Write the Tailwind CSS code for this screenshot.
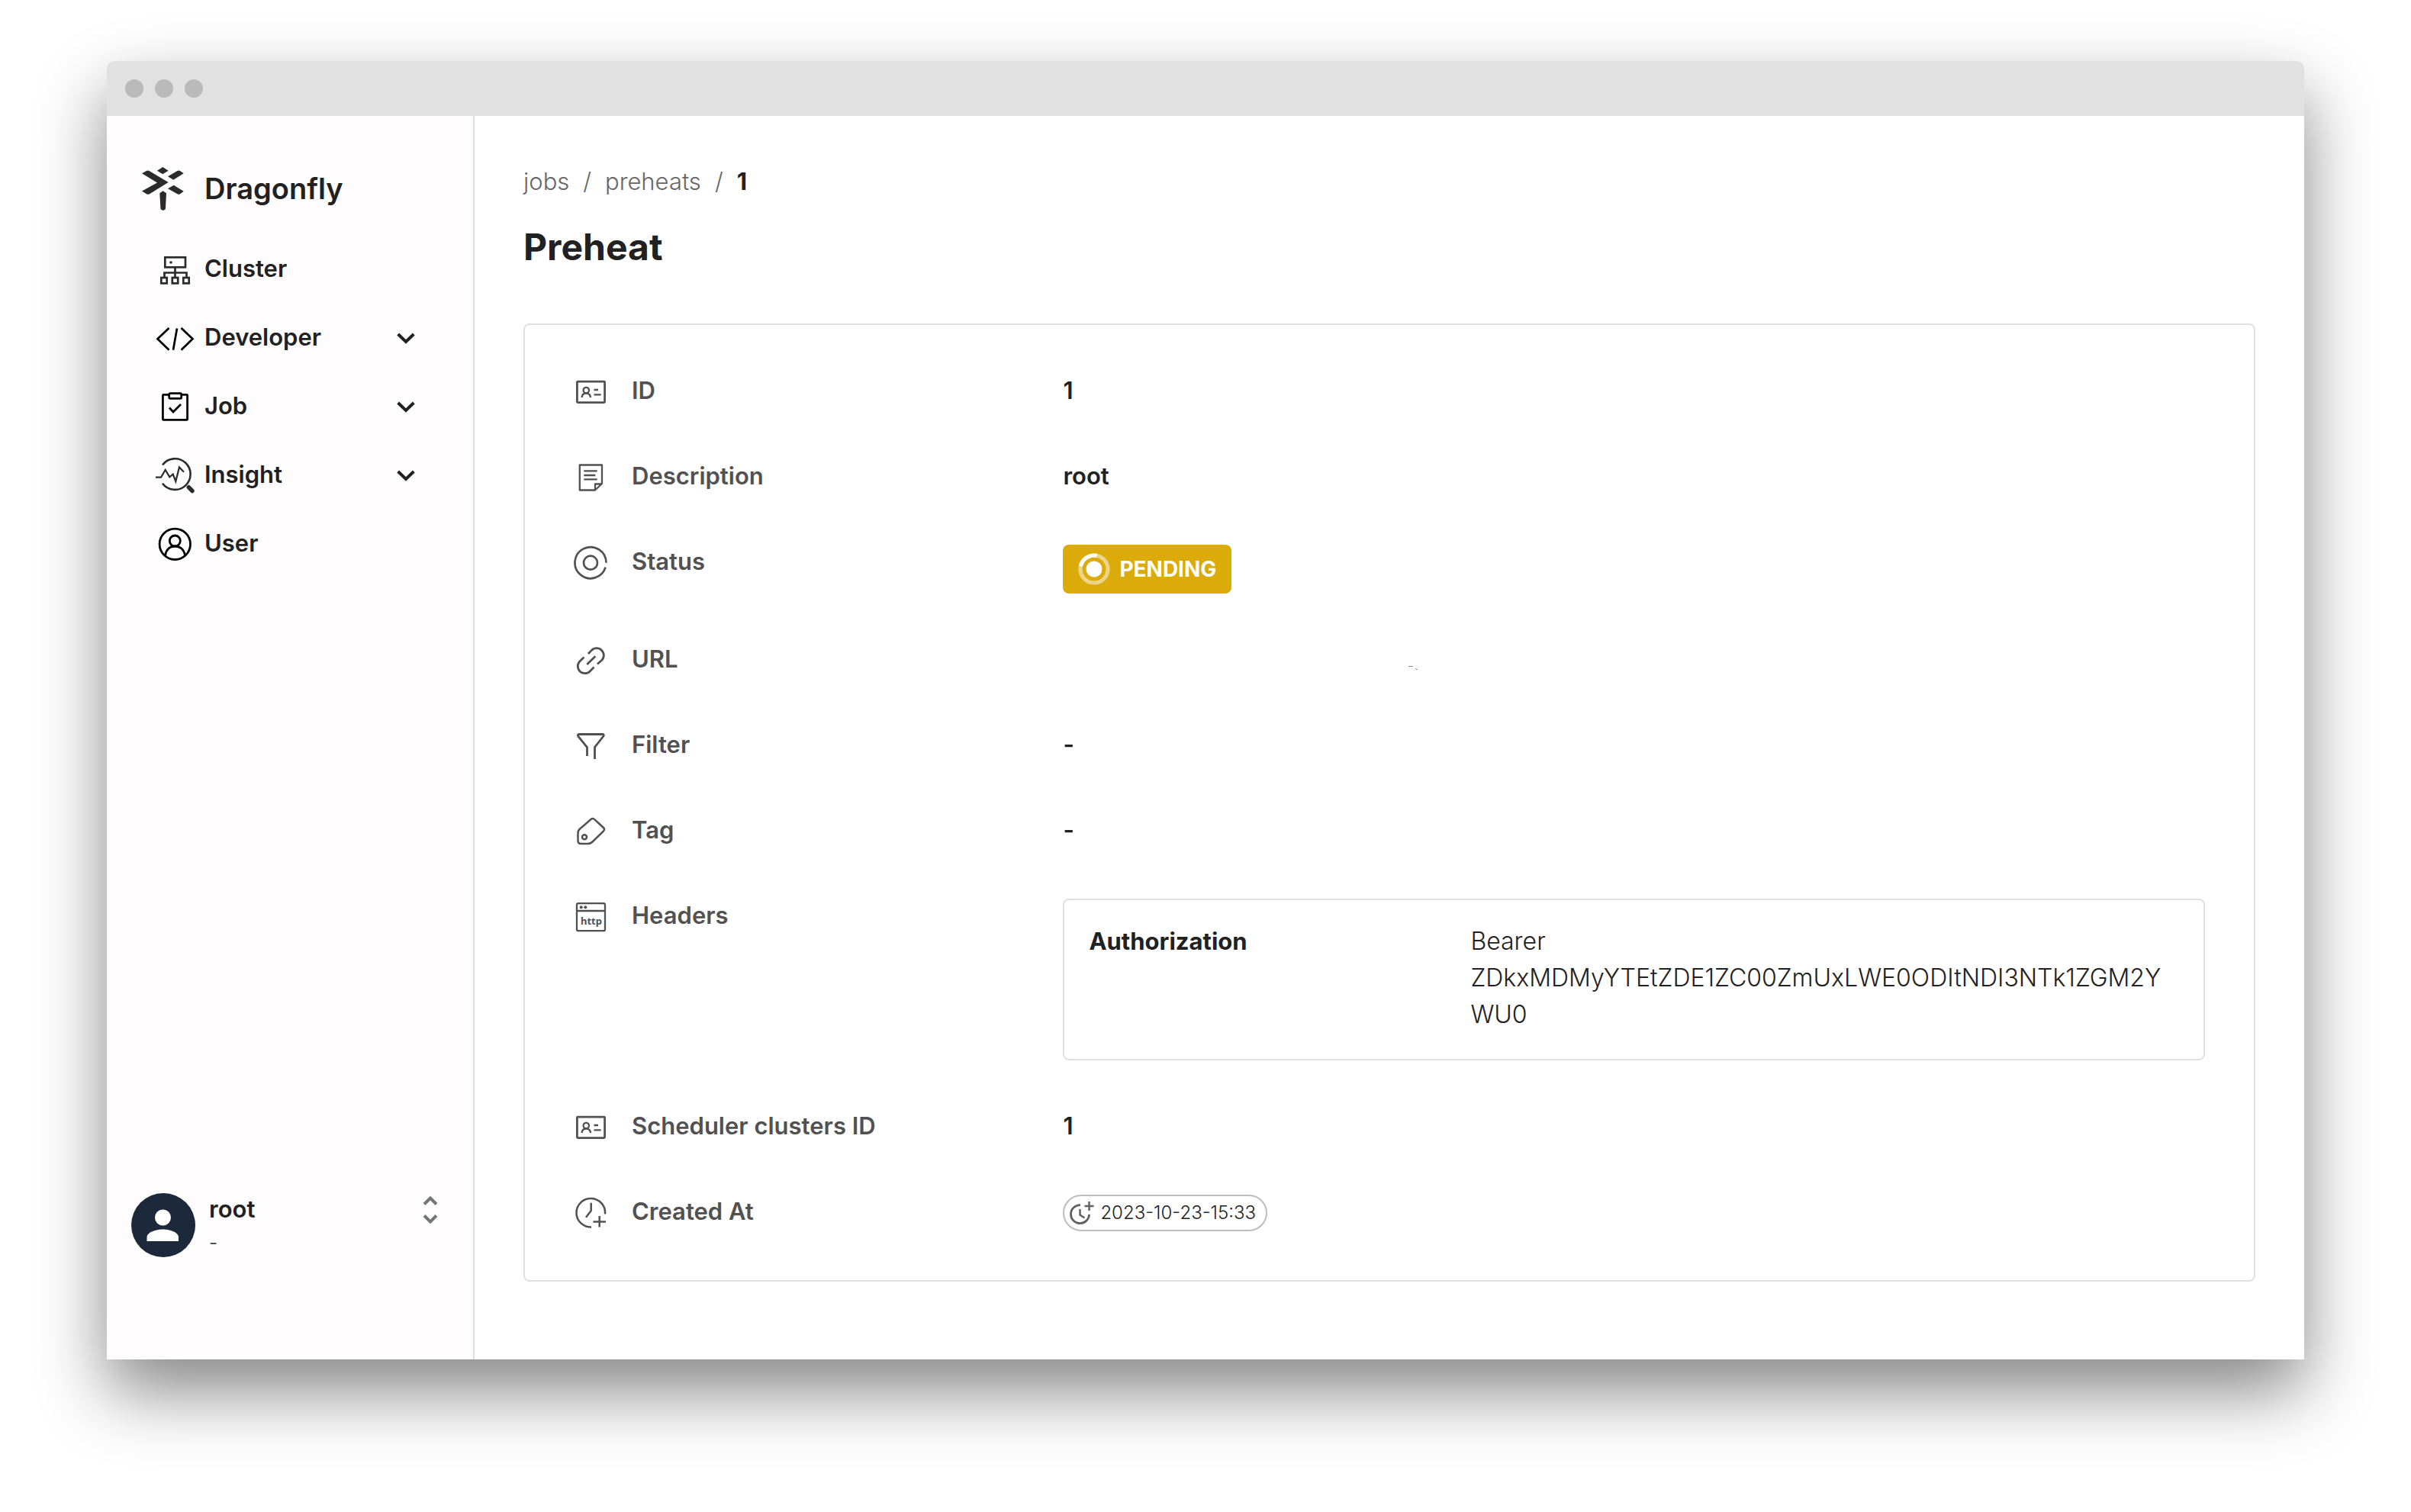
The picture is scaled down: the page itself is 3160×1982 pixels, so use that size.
<!DOCTYPE html>
<html lang="en">
<head>
  <meta charset="UTF-8" />
  <meta name="viewport" content="width=device-width, initial-scale=1.0"/>
  <title>Dragonfly - Preheat</title>
  <script src="https://cdn.jsdelivr.net/npm/@tailwindcss/browser@4"></script>
  <style>
    body {
      font-family: 'Inter', 'Liberation Sans', sans-serif;
    }
  </style>
</head>
<body class="bg-white text-[#212121] text-[31px] px-[140px] pt-20 pb-[200px]">

  <!-- Browser window -->
  <div class="rounded-t-[10px] shadow-[0_42px_92px_rgba(0,0,0,0.48)]">
    <div class="flex items-center gap-[15px] h-[72px] pl-6 bg-[#e1e1e1] rounded-t-[10px]">
      <span class="size-6 rounded-full bg-[#bababa]"></span>
      <span class="size-6 rounded-full bg-[#bababa]"></span>
      <span class="size-6 rounded-full bg-[#bababa]"></span>
    </div>

    <div class="flex bg-white">

      <!-- Sidebar -->
      <aside class="flex flex-col shrink-0 w-[482px] pt-16 pb-[130px] bg-[#fefcfd] border-r-2 border-[#e0e0e0]">
        <a href="#" class="flex items-center gap-6 pl-11 text-[38px] leading-[62px] font-semibold">
          <svg class="w-[60px] h-[62px]" viewBox="0 0 60 62" fill="#2b2b2b">
            <path d="M29.3 3L36.7 7.7L29.3 12.3L22 7.7Z"/>
            <path d="M2 11.3L8 8Q10 7 12 8.200L36.700 23L12 38.200Q10 39.400 8 38.300L2 34.500L22 23.500Z"/>
            <path d="M36 15.300L48.500 8Q50.500 7 52 8L56.700 11.300L43.300 19.700Z"/>
            <path d="M36 31.300L43.700 26.700L56.700 34.700L52 38.300Q50.500 39.400 48.500 38.300Z"/>
            <path d="M29.500 34.300L34 37.300L32.900 58.300L29.700 60L26.500 58.300L25.300 37.300Z"/>
          </svg>
          Dragonfly
        </a>

        <nav class="mt-[29px] font-semibold">
          <a href="#" class="flex items-center gap-[13px] h-[90px] pl-[63px] pr-[76px]">
            <svg class="w-[52px] h-14" viewBox="0 0 52 56" fill="none" stroke="#2b2b2b" stroke-width="2.700">
              <rect x="13.300" y="13.300" width="26.700" height="13"/>
              <circle cx="21" cy="20" r="1.800" fill="#2b2b2b" stroke="none"/>
              <path d="M26.500 27V39M12.500 39V33.500H41.500V39"/>
              <rect x="8.300" y="40" width="7.400" height="7.400"/>
              <rect x="22.800" y="40" width="7.400" height="7.400"/>
              <rect x="37.300" y="40" width="7.400" height="7.400"/>
            </svg>
            Cluster
          </a>
          <button type="button" class="flex items-center gap-[13px] w-full h-[90px] pl-[63px] pr-[76px]">
            <svg class="w-[52px] h-14" viewBox="0 0 52 56" fill="none" stroke="#000" stroke-width="2.700">
              <path d="M18.500 16L3.500 30.300L18.500 44.700M34.500 16L49.500 30.300L34.500 44.700M29 16.500L24 44.700"/>
            </svg>
            Developer
            <svg class="ml-auto w-6 h-5" viewBox="0 0 24 20" fill="none" stroke="#212121" stroke-width="4"><path d="M1.700 6L12 16L22.300 6"/></svg>
          </button>
          <button type="button" class="flex items-center gap-[13px] w-full h-[90px] pl-[63px] pr-[76px]">
            <svg class="w-[52px] h-14" viewBox="0 0 52 56" fill="none" stroke="#000" stroke-width="2.800">
              <rect x="10.400" y="13.400" width="32.200" height="33" rx="1"/>
              <rect x="18.700" y="11.700" width="16" height="6.600" rx="1.500" fill="#fff"/>
              <path d="M19 30.500L24 36L34 26"/>
            </svg>
            Job
            <svg class="ml-auto w-6 h-5" viewBox="0 0 24 20" fill="none" stroke="#212121" stroke-width="4"><path d="M1.700 6L12 16L22.300 6"/></svg>
          </button>
          <button type="button" class="flex items-center gap-[13px] w-full h-[90px] pl-[63px] pr-[76px]">
            <svg class="w-[52px] h-14" viewBox="0 0 52 56" fill="none" stroke="#2b2b2b" stroke-width="2.600">
              <path d="M10 15.500A20.300 20.300 0 1 1 10 39.700"/>
              <path d="M1 31.700H8L13.700 22L19.300 31.300L23.700 27.500L27.300 37L32 18.500L38 24.700" stroke-width="2.200"/>
              <path d="M44.300 44.700L49 49.500" stroke-width="5.500" stroke-linecap="round"/>
            </svg>
            Insight
            <svg class="ml-auto w-6 h-5" viewBox="0 0 24 20" fill="none" stroke="#212121" stroke-width="4"><path d="M1.700 6L12 16L22.300 6"/></svg>
          </button>
          <a href="#" class="flex items-center gap-[13px] h-[90px] pl-[63px] pr-[76px]">
            <svg class="w-[52px] h-14" viewBox="0 0 52 56" fill="none" stroke="#000" stroke-width="2.800">
              <circle cx="26.300" cy="29.300" r="20.200"/>
              <circle cx="26.300" cy="25" r="7"/>
              <path d="M13.500 44.500C14.500 36 20 32 26.300 32S38.500 36 39.500 44.500"/>
            </svg>
            User
          </a>
        </nav>

        <!-- Signed in user -->
        <button type="button" class="flex items-start mt-auto pl-8 pr-[46px] text-left">
          <svg class="size-[84px]" viewBox="0 0 84 84">
            <circle cx="42" cy="42" r="42" fill="#1c293a"/>
            <circle cx="41.500" cy="32" r="10.500" fill="#fff"/>
            <path d="M20.500 63V58C20.500 51 33 47.500 41.500 47.500S62 51 62 58V63Z" fill="#fff"/>
          </svg>
          <span class="flex flex-col ml-[18px]">
            <span class="leading-[42px] font-semibold">root</span>
            <span class="text-[24px] leading-[46px] text-[#515151]">-</span>
          </span>
          <svg class="ml-auto w-5 h-11" viewBox="0 0 20 44" fill="none" stroke="#757575" stroke-width="4"><path d="M2 14.500L10 6.500L18 14.500M2 29.500L10 37.500L18 29.500"/></svg>
        </button>
      </aside>

      <!-- Main Content -->
      <main class="grow min-w-0 px-16 pt-[62px] pb-[102px]">
        <nav class="flex gap-[18px] leading-[48px] font-light text-[#666666]">
          <a href="#">jobs</a>
          <span>/</span>
          <a href="#">preheats</a>
          <span>/</span>
          <span class="font-bold text-[#212121]">1</span>
        </nav>
        <h1 class="mt-8 text-[48px] leading-[60px] font-bold">Preheat</h1>

        <dl class="flex flex-col gap-16 mt-[70px] p-16 border-2 border-[#e0e0e0] rounded-lg leading-[44px] font-semibold">
          <div class="flex min-h-12">
            <dt class="flex items-start gap-8 w-[30%] text-[#515151]">
              <svg class="w-11 h-12" viewBox="0 0 44 48" fill="none" stroke="#515151" stroke-width="2.800">
                <rect x="4.400" y="10.200" width="36.200" height="27.400" rx="1"/>
                <circle cx="16.300" cy="21.500" r="3.700" stroke-width="2.300"/>
                <path d="M10.600 31C11 27 13 25.500 16.300 25.500S21.600 27 22 31M26.500 21H32M26.500 27.300H35.700" stroke-width="2.300"/>
              </svg>
              ID
            </dt>
            <dd class="w-[70%]">1</dd>
          </div>

          <div class="flex min-h-12">
            <dt class="flex items-start gap-8 w-[30%] text-[#515151]">
              <svg class="w-11 h-12" viewBox="0 0 44 48" fill="none" stroke="#515151" stroke-width="2.300" stroke-linejoin="round">
                <path d="M7.800 7.500H37V32L28 40.500H7.800ZM28 40V32.500H37"/>
                <path d="M13.300 15.300H30.700M13.300 21H28.300M13.300 26.300H30.700"/>
              </svg>
              Description
            </dt>
            <dd class="w-[70%]">root</dd>
          </div>

          <div class="flex min-h-12">
            <dt class="flex items-start gap-8 w-[30%] text-[#515151]">
              <svg class="w-11 h-12" viewBox="0 0 44 48" fill="none" stroke="#515151" stroke-width="2.700">
                <path d="M41.600 29.700A20.500 20.500 0 1 1 42.500 23.700"/>
                <circle cx="22" cy="23.700" r="9"/>
              </svg>
              Status
            </dt>
            <dd class="w-[70%]">
              <span class="flex items-center gap-3 w-fit h-16 px-5 rounded-lg bg-[#dbab0a] text-white text-[28px] font-bold">
                <svg class="size-[42px]" viewBox="0 0 42 42" fill="none" stroke="#fff" stroke-width="5.200">
                  <circle cx="21" cy="21" r="18" stroke-opacity="0.500"/>
                  <path d="M3.400 17.300A18 18 0 0 1 24.700 3.400"/>
                  <circle cx="21" cy="21" r="10.500" fill="#fff" stroke="none"/>
                </svg>
                PENDING
              </span>
            </dd>
          </div>

          <div class="flex min-h-12">
            <dt class="flex items-start gap-8 w-[30%] text-[#515151]">
              <svg class="w-11 h-12" viewBox="0 0 44 48" fill="none" stroke="#515151" stroke-width="2.800">
                <path d="M19 15L23.400 10.400A9.300 9.300 0 0 1 36.600 23.600L31 28.500M13.500 19.500L8 24.700A9.300 9.300 0 0 0 21.200 37.900L26.500 32.500M17.300 29L28.300 18.300"/>
              </svg>
              URL
            </dt>
            <dd class="w-[70%]">
              <svg class="ml-[452px] w-4 h-11" viewBox="0 0 16 44" fill="none" stroke="#8a8a8a" stroke-width="1"><path d="M1 31.500H7M10 34.500L13 36"/></svg>
            </dd>
          </div>

          <div class="flex min-h-12">
            <dt class="flex items-start gap-8 w-[30%] text-[#515151]">
              <svg class="w-11 h-12" viewBox="0 0 44 48" fill="none" stroke="#515151" stroke-width="2.800">
                <path d="M17.500 37V25.500L6 11.500Q4.500 8.500 7 8.500H37.700Q40.500 8.500 38.500 11.500L27.500 25.500V41"/>
              </svg>
              Filter
            </dt>
            <dd class="w-[70%]">-</dd>
          </div>

          <div class="flex min-h-12">
            <dt class="flex items-start gap-8 w-[30%] text-[#515151]">
              <svg class="w-11 h-12" viewBox="0 0 44 48" fill="none" stroke="#515151" stroke-width="2.500">
                <path d="M5.500 26Q5.500 23 7.500 21L22.500 8Q25 6 27.500 8.300L39 19Q41 21 39 23.300L24.500 37.500Q22 40 18.500 40H9.500Q5.500 40 5.500 36Z"/>
                <circle cx="14" cy="31.300" r="3"/>
              </svg>
              Tag
            </dt>
            <dd class="w-[70%]">-</dd>
          </div>

          <div class="flex min-h-12">
            <dt class="flex items-start gap-8 w-[30%] text-[#515151]">
              <svg class="w-11 h-12" viewBox="0 0 44 48" fill="none" stroke="#515151" stroke-width="2.300">
                <rect x="4" y="6.200" width="37" height="36" rx="2"/>
                <path d="M4 16H41"/>
                <g fill="#515151" stroke="none">
                  <circle cx="9.700" cy="11.300" r="2"/>
                  <circle cx="15.300" cy="11.300" r="2"/>
                  <text x="9" y="34" font-family="Noto Sans" font-size="13" font-weight="700">http</text>
                </g>
              </svg>
              Headers
            </dt>
            <dd class="flex w-[70%] px-8 pt-[30px] pb-[34px] border-2 border-[#e0e0e0] rounded-lg leading-[48px]">
              <span class="shrink-0 w-[35%] font-bold">Authorization</span>
              <span class="w-[65%] text-[32px] font-light">Bearer<br>ZDkxMDMyYTEtZDE1ZC00ZmUxLWE0ODItNDI3NTk1ZGM2Y<br>WU0</span>
            </dd>
          </div>

          <div class="flex min-h-12">
            <dt class="flex items-start gap-8 w-[30%] text-[#515151]">
              <svg class="w-11 h-12" viewBox="0 0 44 48" fill="none" stroke="#515151" stroke-width="2.800">
                <rect x="4.400" y="10.200" width="36.200" height="27.400" rx="1"/>
                <circle cx="16.300" cy="21.500" r="3.700" stroke-width="2.300"/>
                <path d="M10.600 31C11 27 13 25.500 16.300 25.500S21.600 27 22 31M26.500 21H32M26.500 27.300H35.700" stroke-width="2.300"/>
              </svg>
              Scheduler clusters ID
            </dt>
            <dd class="w-[70%]">1</dd>
          </div>

          <div class="flex min-h-12">
            <dt class="flex items-start gap-8 w-[30%] text-[#515151]">
              <svg class="w-11 h-12" viewBox="0 0 44 48" fill="none" stroke="#515151" stroke-width="2.500">
                <path d="M23 42.500A18.800 18.800 0 1 1 41 25.500M22.700 10.700V21L16 29.700M25.400 35.500H42M33.700 28V42.500"/>
              </svg>
              Created At
            </dt>
            <dd class="w-[70%]">
              <span class="flex items-center gap-2 w-fit h-12 pl-[7px] pr-[13px] border-2 border-[#bdbdbd] rounded-full text-[24px] font-light">
                <svg class="size-8" viewBox="0 0 32 32" fill="none" stroke="#616161" stroke-width="2.800">
                  <path d="M14 5.600A12 12 0 1 0 25.500 18"/>
                  <path d="M13.500 11V18.500L19.500 22.500M19.500 7H31.500M25.500 1V13" stroke-width="2.500"/>
                </svg>
                2023-10-23-15:33
              </span>
            </dd>
          </div>
        </dl>
      </main>
    </div>
  </div>

</body>
</html>
